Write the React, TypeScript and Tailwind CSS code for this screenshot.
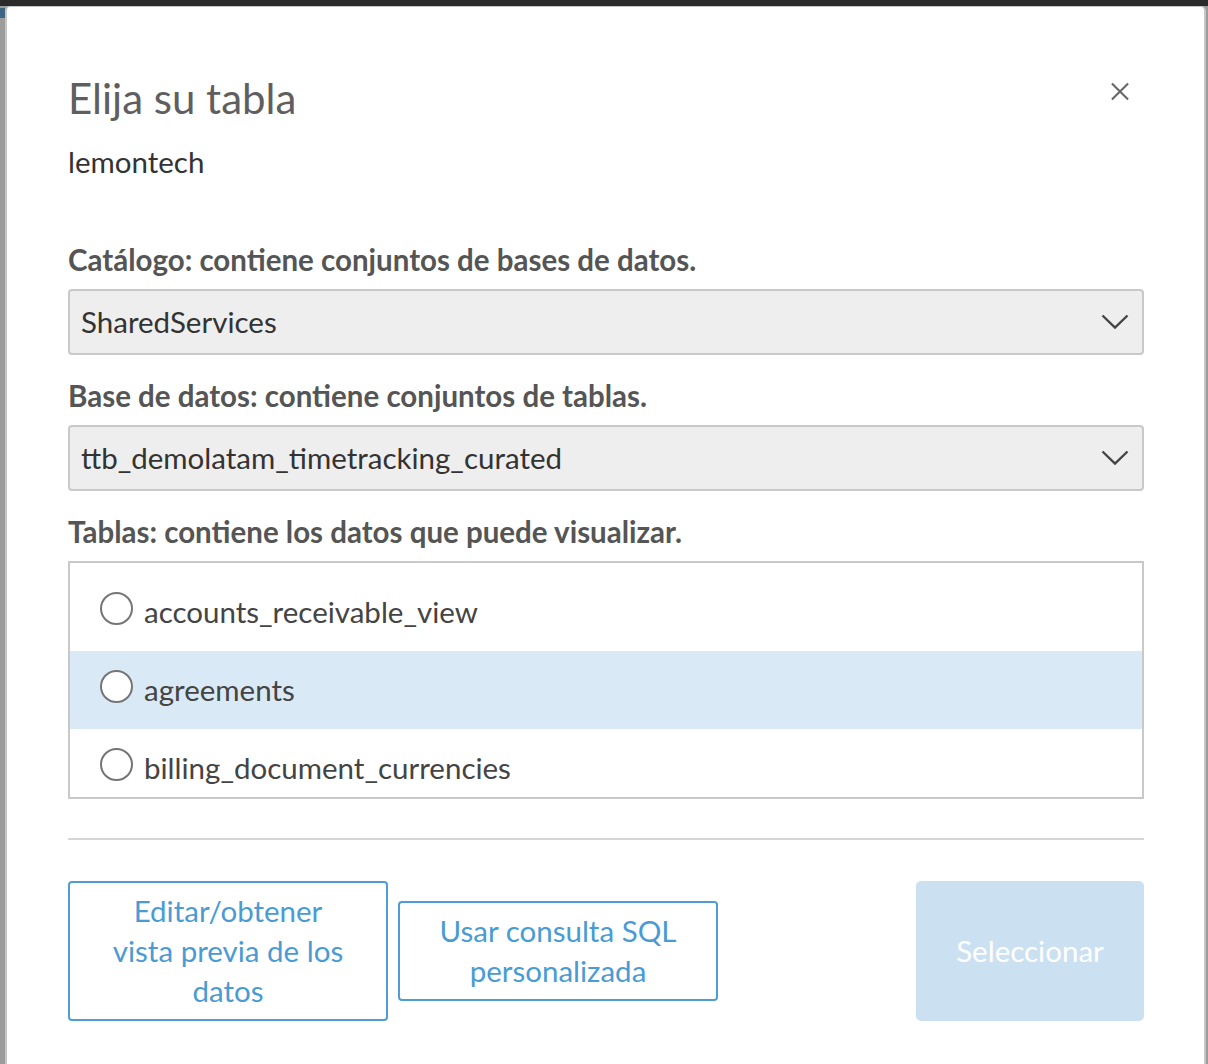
import React from 'react'

const tables = ['accounts_receivable_view', 'agreements', 'billing_document_currencies']

function Chevron() {
  return (
    <svg width="28" height="16" viewBox="0 0 28 16" fill="none" className="shrink-0">
      <path d="M1.5 1.5 L14 13.5 L26.5 1.5" stroke="#444" strokeWidth="2.4" />
    </svg>
  )
}

function Select({ value }: { value: string }) {
  return (
    <div className="flex h-[66px] items-center justify-between rounded-[4px] border-2 border-[#c9c9c9] bg-[#eeeeee] pl-[11px] pr-[13px]">
      <span className="text-[29.5px] leading-[40px] text-[#333]">{value}</span>
      <Chevron />
    </div>
  )
}

function Label({ children }: { children: React.ReactNode }) {
  return <div className="mb-[9px] text-[29.5px] font-bold leading-[40px] text-[#555]">{children}</div>
}

export default function App() {
  return (
    <div
      className="relative h-[1064px] w-[1208px] overflow-hidden bg-[#9c9c9c]"
      style={{ fontFamily: 'Lato, "Noto Sans", sans-serif' }}
    >
      <div className="h-[6px] bg-[#2a2a2a]" />
      <div className="absolute left-0 top-[8px] h-[10px] w-[5px] bg-[#3d6585]" />

      {/* Modal */}
      <div className="ml-[5px] mr-[2px] h-[1060px] rounded-t-[5px] border-x-2 border-t border-[#c6c6c6] bg-white pl-[61px] pr-[60px] pt-[67px]">
        {/* Header */}
        <div className="flex items-start justify-between">
          <h1 className="text-[42px] leading-[48px] text-[#5f5f5f]">Elija su tabla</h1>
          <button className="mr-[15px] mt-[8px] flex h-[18px] w-[18px] items-center justify-center">
            <svg width="19" height="19" viewBox="0 0 19 19">
              <path d="M1 1 L18 18 M18 1 L1 18" stroke="#666" strokeWidth="2.2" />
            </svg>
          </button>
        </div>
        <div className="mt-[20px] text-[29.5px] leading-[40px] text-[#333]">lemontech</div>

        <div className="mt-[58px]">
          <Label>Catálogo: contiene conjuntos de bases de datos.</Label>
          <Select value="SharedServices" />
        </div>

        <div className="mt-[21px]">
          <Label>Base de datos: contiene conjuntos de tablas.</Label>
          <Select value="ttb_demolatam_timetracking_curated" />
        </div>

        <div className="mt-[21px]">
          <Label>Tablas: contiene los datos que puede visualizar.</Label>
          <div className="h-[238px] overflow-hidden border-2 border-[#c9c9c9] pt-[10px]">
            {tables.map((t, i) => (
              <div
                key={t}
                className={`flex h-[78px] items-center pl-[30px] ${i === 1 ? 'bg-[#d9eaf6]' : ''}`}
              >
                <span className="-mt-[8px] h-[33px] w-[33px] shrink-0 rounded-full border-2 border-[#757575] bg-white" />
                <span className="ml-[11px] text-[29.5px] leading-[40px] text-[#444]">{t}</span>
              </div>
            ))}
          </div>
        </div>

        <div className="mt-[39px] h-[2px] bg-[#d6d6d6]" />

        {/* Footer buttons */}
        <div className="mt-[41px] flex items-center justify-between">
          <div className="flex items-center gap-[10px]">
            <button className="flex h-[140px] w-[320px] flex-col items-center justify-center rounded-[4px] border-2 border-[#4f9dd4] text-[29.5px] leading-[40px] text-[#4a9bd4]">
              <span>Editar/obtener</span>
              <span>vista previa de los</span>
              <span>datos</span>
            </button>
            <button className="flex h-[100px] w-[320px] flex-col items-center justify-center rounded-[4px] border-2 border-[#4f9dd4] text-[29.5px] leading-[40px] text-[#4a9bd4]">
              <span>Usar consulta SQL</span>
              <span>personalizada</span>
            </button>
          </div>
          <button className="flex h-[140px] w-[228px] items-center justify-center rounded-[5px] bg-[#cbe1f2] text-[29.5px] leading-[40px] text-white">
            Seleccionar
          </button>
        </div>
      </div>
    </div>
  )
}
